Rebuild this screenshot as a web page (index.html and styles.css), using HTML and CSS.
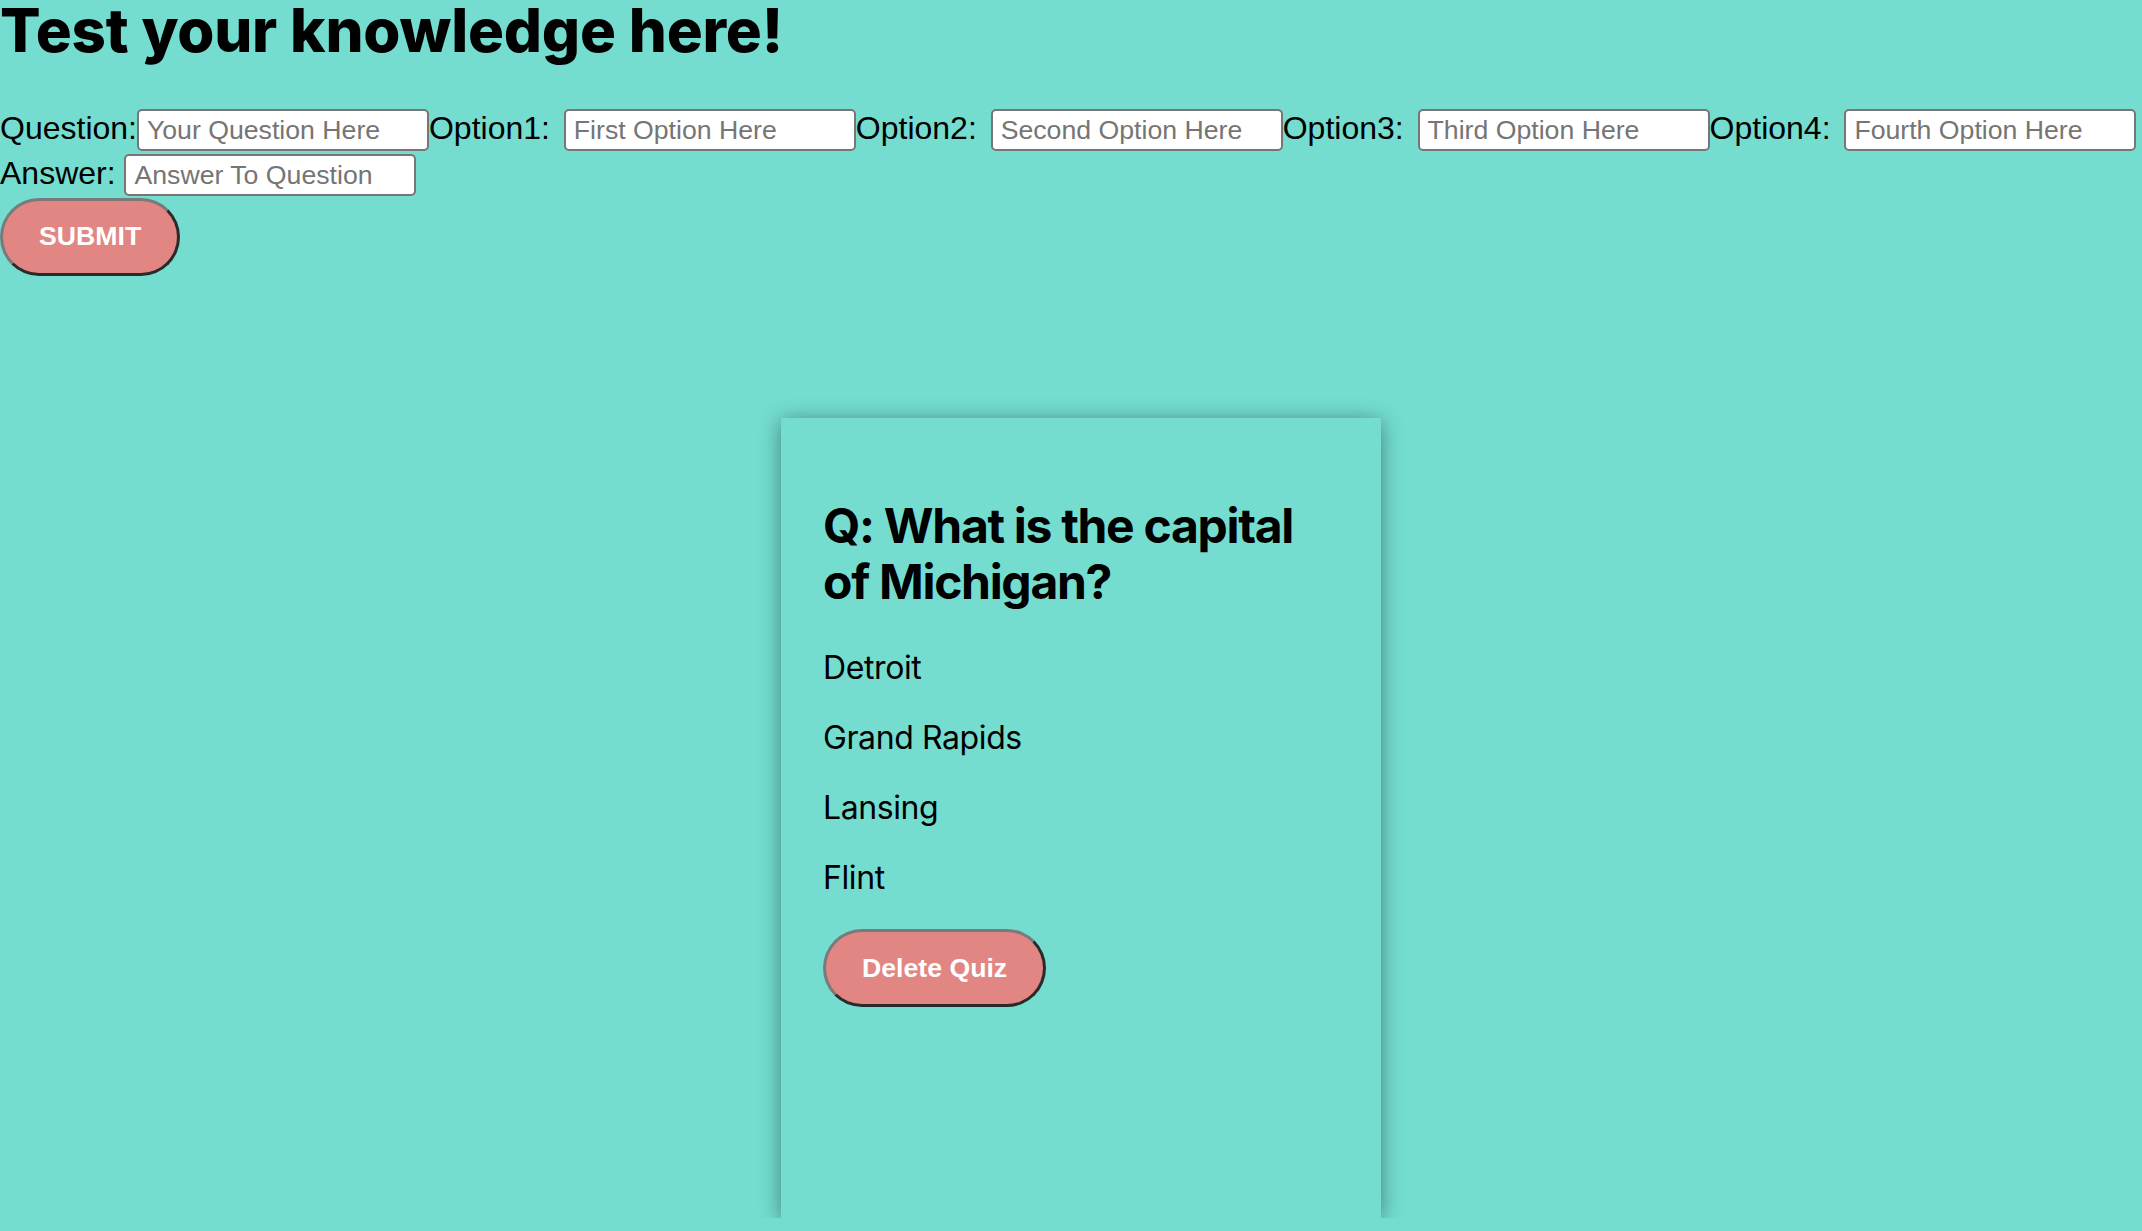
FILE: index.html
```html
<!DOCTYPE html>
<html lang="en">
<head>
<meta charset="utf-8">
<title>Quiz</title>
<link rel="stylesheet" href="styles.css">
</head>
<body>
<h1 class="title">Test your knowledge here!</h1>
<form class="quiz-form">
<div class="fields"><label class="lbl">Question:</label><input class="field" type="text" placeholder="Your Question Here"><label class="lbl lbl-opt">Option1: </label><input class="field" type="text" placeholder="First Option Here"><label class="lbl lbl-opt">Option2: </label><input class="field" type="text" placeholder="Second Option Here"><label class="lbl lbl-opt">Option3: </label><input class="field" type="text" placeholder="Third Option Here"><label class="lbl lbl-opt">Option4: </label><input class="field" type="text" placeholder="Fourth Option Here"><label class="lbl">Answer: </label><input class="field" type="text" placeholder="Answer To Question"></div>
<button class="pill-btn" type="button">SUBMIT</button>
</form>
<main class="cards">
<section class="card">
<h2 class="card-q">Q: What is the capital of Michigan?</h2>
<p class="card-opt">Detroit</p>
<p class="card-opt">Grand Rapids</p>
<p class="card-opt">Lansing</p>
<p class="card-opt">Flint</p>
<button class="pill-btn" type="button">Delete Quiz</button>
</section>
</main>
</body>
</html>
```

FILE: styles.css
```css
html, body {
  margin: 0;
  padding: 0;
  background: #74ddd0;
}
body {
  font-family: "Liberation Sans", Arial, sans-serif;
  color: #000;
}
.title {
  font-family: "Inter", "Liberation Sans", sans-serif;
  font-weight: 800;
  font-size: 60px;
  line-height: 60px;
  margin: 0 0 47.5px 0;
  letter-spacing: -0.2px;
}
.quiz-form {
  margin: 0;
}
.fields {
  font-size: 32px;
  line-height: normal;
}
.lbl {
  white-space: pre;
}
.lbl-opt {
  padding-right: 5px;
}
.field {
  box-sizing: border-box;
  width: 292px;
  height: 42px;
  margin: 1.5px 0;
  padding: 0 8px;
  border: 2px solid #767676;
  border-radius: 5px;
  background: #fff;
  font-family: "Liberation Sans", Arial, sans-serif;
  font-size: 26.67px;
  color: #000;
  vertical-align: baseline;
}
.field::placeholder {
  color: #757575;
}
.pill-btn {
  display: block;
  box-sizing: border-box;
  height: 78px;
  padding: 0 36px;
  border-width: 3px;
  border-style: solid;
  border-color: #7a7a7a #2a2a2a #2a2a2a #7a7a7a;
  border-radius: 40px;
  background: #e18683;
  color: #fff;
  font-family: "Liberation Sans", Arial, sans-serif;
  font-weight: 700;
  font-size: 26.67px;
  cursor: pointer;
}
.cards {
  display: flex;
  justify-content: center;
  padding-left: 20px;
  margin-top: 142.5px;
}
.card {
  box-sizing: border-box;
  width: 600px;
  height: 800px;
  padding: 40px 42px;
  background: #74ddd0;
  box-shadow: 0 3px 20px rgba(0, 0, 0, 0.42);
  font-family: "Inter", "Liberation Sans", sans-serif;
}
.card-q {
  font-size: 48px;
  font-weight: 700;
  line-height: 56px;
  margin: 40px 0 39px 0;
  letter-spacing: -1.3px;
}
.card-opt {
  font-size: 32px;
  line-height: 38px;
  margin: 32px 0;
  letter-spacing: -0.4px;
}
```
